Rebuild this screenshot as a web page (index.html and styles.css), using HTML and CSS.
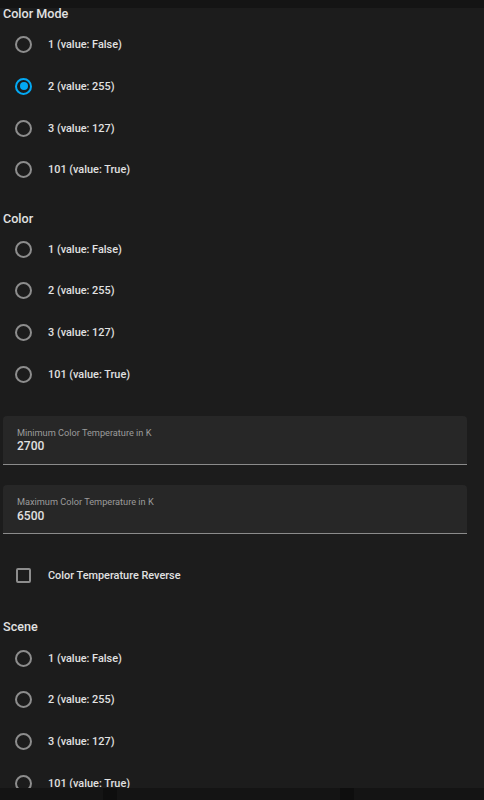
FILE: index.html
```html
<!DOCTYPE html>
<html lang="en">
<head>
    <meta charset="UTF-8">
    <meta name="viewport" content="width=device-width, initial-scale=1.0">
    <title>Light Options</title>
    <link rel="stylesheet" href="styles.css">
</head>
<body>
    <div class="topbar"></div>

    <div class="content">
        <div class="section">
            <h3 class="section-title">Color Mode</h3>
            <div class="radio-list">
                <label class="radio-row"><span class="radio"></span>1 (value: False)</label>
                <label class="radio-row"><span class="radio checked"></span>2 (value: 255)</label>
                <label class="radio-row"><span class="radio"></span>3 (value: 127)</label>
                <label class="radio-row"><span class="radio"></span>101 (value: True)</label>
            </div>
        </div>

        <div class="section">
            <h3 class="section-title">Color</h3>
            <div class="radio-list">
                <label class="radio-row"><span class="radio"></span>1 (value: False)</label>
                <label class="radio-row"><span class="radio"></span>2 (value: 255)</label>
                <label class="radio-row"><span class="radio"></span>3 (value: 127)</label>
                <label class="radio-row"><span class="radio"></span>101 (value: True)</label>
            </div>
        </div>

        <div class="field first-field">
            <div class="field-label">Minimum Color Temperature in K</div>
            <div class="field-value">2700</div>
        </div>

        <div class="field">
            <div class="field-label">Maximum Color Temperature in K</div>
            <div class="field-value">6500</div>
        </div>

        <label class="check-row"><span class="checkbox"></span>Color Temperature Reverse</label>

        <div class="section scene">
            <h3 class="section-title">Scene</h3>
            <div class="radio-list">
                <label class="radio-row"><span class="radio"></span>1 (value: False)</label>
                <label class="radio-row"><span class="radio"></span>2 (value: 255)</label>
                <label class="radio-row"><span class="radio"></span>3 (value: 127)</label>
                <label class="radio-row"><span class="radio"></span>101 (value: True)</label>
            </div>
        </div>
    </div>

    <div class="bottombar">
        <span class="bar-notch left"></span>
        <span class="bar-notch right"></span>
    </div>
</body>
</html>
```

FILE: styles.css
```css
body {
    margin: 0;
    background-color: #1c1c1c;
    color: #e1e1e1;
    font-family: Roboto, 'Noto Sans', Arial, sans-serif;
    overflow: hidden;
}

.topbar {
    height: 8px;
    background-color: #141414;
}

.content {
    padding: 0 17px 0 3px;
}

.section + .section {
    margin-top: 22px;
}

.section-title {
    margin: 0 0 3.9px;
    font-size: 12.6px;
    line-height: 12px;
    font-weight: 500;
}

.radio-row {
    display: flex;
    align-items: center;
    height: 41.67px;
    padding-left: 12px;
    font-size: 10.9px;
    font-weight: 500;
}

.radio {
    box-sizing: border-box;
    width: 17px;
    height: 17px;
    margin-right: 16px;
    border: 2px solid #8d8d8d;
    border-radius: 50%;
    display: flex;
    align-items: center;
    justify-content: center;
}

.radio.checked {
    border-color: #03a9f4;
}

.radio.checked::after {
    content: "";
    width: 8px;
    height: 8px;
    border-radius: 50%;
    background-color: #03a9f4;
}

.field {
    height: 48px;
    margin-top: 20.5px;
    padding-left: 14px;
    background-color: #272727;
    border-bottom: 1px solid #8b8b8b;
    border-radius: 4px 4px 0 0;
}

.field.first-field {
    margin-top: 20.8px;
}

.field-label {
    padding-top: 11px;
    font-size: 9.2px;
    line-height: 11px;
    color: #9b9b9b;
}

.field-value {
    margin-top: 1.4px;
    font-size: 12px;
    line-height: 15px;
    font-weight: 500;
}

.check-row {
    display: flex;
    align-items: center;
    height: 41.67px;
    margin-top: 20.7px;
    padding-left: 13px;
    font-size: 10.9px;
    font-weight: 500;
}

.checkbox {
    box-sizing: border-box;
    width: 15px;
    height: 15px;
    margin-right: 17px;
    border: 2px solid #8d8d8d;
    border-radius: 2px;
}

.section.scene {
    margin-top: 24.8px;
}

.bottombar {
    position: fixed;
    left: 0;
    right: 0;
    bottom: 0;
    height: 12px;
    background-color: #141414;
}

.bar-notch {
    position: absolute;
    top: 0;
    bottom: 0;
    width: 14px;
    background-color: #0e0e0e;
}

.bar-notch.left {
    left: 103px;
}

.bar-notch.right {
    left: 340px;
}
```
